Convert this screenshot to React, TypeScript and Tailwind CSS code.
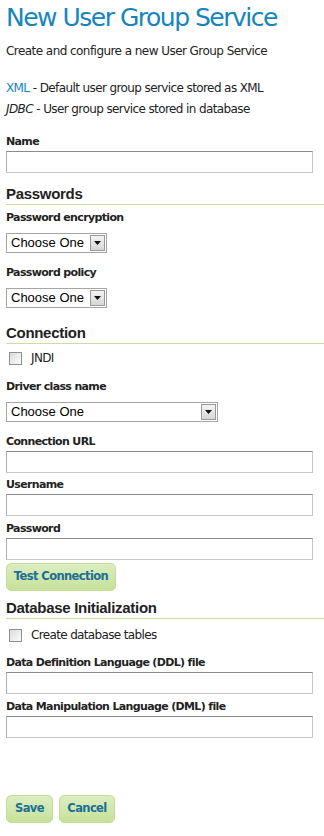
const font = { fontFamily: '"DejaVu Sans", Verdana, sans-serif' }
const arial = { fontFamily: '"Liberation Sans", Arial, sans-serif' }

function Label({ text, mt }: { text: string; mt: string }) {
  return (
    <div className={`${mt} h-[14px] text-[11px] font-bold leading-[14px] tracking-[-0.65px] text-[#222]`}>{text}</div>
  )
}

function TextInput({ mt }: { mt: string }) {
  return (
    <div
      className={`${mt} h-[22px] w-[307px] border border-[#c8c8c8] border-t-[#8a8a8a] border-l-[#b0b0b0] bg-white`}
    />
  )
}

function Select({ mt, width }: { mt: string; width: string }) {
  return (
    <div className={`${mt} ${width} flex h-[20px] items-center border border-[#a5a5a5] bg-white pl-[4px] pr-[1px]`}>
      <span className="flex-1 text-[13px] leading-[18px] text-black" style={arial}>
        Choose One
      </span>
      <span className="flex h-[16px] w-[15px] items-center justify-center border border-[#9a9a9a] bg-gradient-to-b from-[#f4f4f4] to-[#d6d6d6]">
        <svg width="7" height="4" viewBox="0 0 7 4">
          <path d="M0 0h7L3.5 4z" fill="#111" />
        </svg>
      </span>
    </div>
  )
}

function Header({ text, mt }: { text: string; mt: string }) {
  return (
    <div
      className={`${mt} h-[20px] border-b border-[#c9dea2] text-[15px] font-bold leading-[18px] tracking-[-0.3px] text-[#222]`}
      style={arial}
    >
      {text}
    </div>
  )
}

function Check({ text, mt }: { text: string; mt: string }) {
  return (
    <div className={`${mt} flex h-[15px] items-center`}>
      <span className="ml-[3px] h-[13px] w-[13px] border border-[#8e8f8f] bg-gradient-to-br from-[#dcdcdc] to-[#fbfbfb]" />
      <span className="ml-[9px] text-[12px] leading-[15px] tracking-[-0.65px] text-[#222]">{text}</span>
    </div>
  )
}

function Btn({ text, width }: { text: string; width: string }) {
  return (
    <div
      className={`${width} flex h-[28px] items-center justify-center rounded-[5px] border border-[#c3dc98] bg-gradient-to-b from-[#dcedc0] to-[#c6e19a] text-[11.5px] font-bold tracking-[-0.6px] text-[#1c6e95]`}
    >
      {text}
    </div>
  )
}

export default function App() {
  return (
    <div className="min-h-[836px] w-[324px] bg-white pl-[6px]" style={font}>
      <h1 className="mt-[3px] h-[30px] text-[25px] font-normal leading-[30px] tracking-[-1.5px] text-[#1585bd]">
        New User Group Service
      </h1>
      <p className="mt-[10px] h-[16px] text-[12px] leading-[16px] tracking-[-0.55px] text-[#222]">
        Create and configure a new User Group Service
      </p>
      <p className="mt-[21px] h-[16px] text-[12px] leading-[16px] tracking-[-0.6px] text-[#222]">
        <span className="text-[#1585bd]">XML</span> - Default user group service stored as XML
      </p>
      <p className="mt-[5px] h-[16px] text-[12px] leading-[16px] tracking-[-0.6px] text-[#222]">
        <i>JDBC</i> - User group service stored in database
      </p>

      <Label text="Name" mt="mt-[18px]" />
      <TextInput mt="mt-[2px]" />

      <Header text="Passwords" mt="mt-[12px]" />
      <Label text="Password encryption" mt="mt-[6px]" />
      <Select mt="mt-[8px]" width="w-[101px]" />
      <Label text="Password policy" mt="mt-[13px]" />
      <Select mt="mt-[8px]" width="w-[101px]" />

      <Header text="Connection" mt="mt-[16px]" />
      <Check text="JNDI" mt="mt-[7px]" />
      <Label text="Driver class name" mt="mt-[14px]" />
      <Select mt="mt-[8px]" width="w-[212px]" />
      <Label text="Connection URL" mt="mt-[13px]" />
      <TextInput mt="mt-[2px]" />
      <Label text="Username" mt="mt-[5px]" />
      <TextInput mt="mt-[2px]" />
      <Label text="Password" mt="mt-[6px]" />
      <TextInput mt="mt-[2px]" />
      <div className="mt-[3px]">
        <Btn text="Test Connection" width="w-[110px]" />
      </div>

      <Header text="Database Initialization" mt="mt-[8px]" />
      <Check text="Create database tables" mt="mt-[9px]" />
      <Label text="Data Definition Language (DDL) file" mt="mt-[13px]" />
      <TextInput mt="mt-[2px]" />
      <Label text="Data Manipulation Language (DML) file" mt="mt-[6px]" />
      <TextInput mt="mt-[2px]" />

      <div className="mt-[57px] flex gap-[6px]">
        <Btn text="Save" width="w-[47px]" />
        <Btn text="Cancel" width="w-[56px]" />
      </div>
    </div>
  )
}
